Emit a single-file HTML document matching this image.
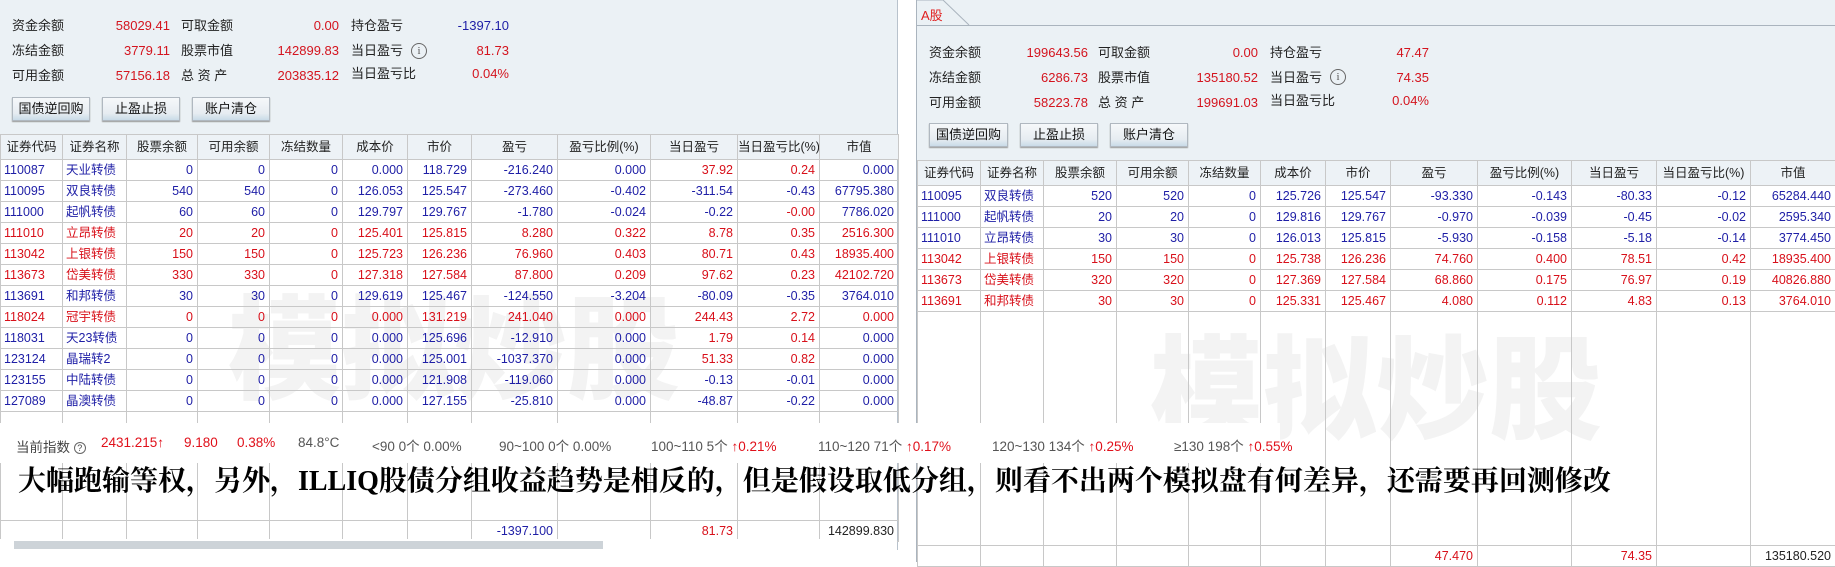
<!DOCTYPE html>
<html><head><meta charset="utf-8"><style>
*{margin:0;padding:0;box-sizing:border-box}
body{width:1835px;height:562px;position:relative;overflow:hidden;background:#fff;font-family:"Liberation Sans","Noto Sans CJK SC",sans-serif;font-size:12px;color:#222}
.abs{position:absolute}
.info{background:#ebf1f5}
.lbl{position:absolute;font-size:13px;color:#222;white-space:nowrap;line-height:16px}
.val{position:absolute;font-size:13px;color:#d4141e;text-align:right;white-space:nowrap;line-height:16px}
.btn{position:absolute;height:24px;border:1px solid #b0b8c0;background:linear-gradient(#f6f8fa,#e6ecf1 70%,#c9dbe8);font-size:13px;text-align:center;line-height:22px;color:#111;box-shadow:0 1px 1px #999}
.ic{position:absolute;width:16px;height:16px;border:1.3px solid #666;border-radius:50%;font-size:11px;line-height:14px;text-align:center;color:#555;font-family:"Liberation Serif",serif}
table{border-collapse:collapse;table-layout:fixed;position:absolute}
td{border:1px solid #c8c8c8;height:21px;padding:0 4px;text-align:right;white-space:nowrap;overflow:hidden;font-size:12.5px;line-height:14px}
th{border:1px solid #c8c8c8;height:25px;font-weight:normal;background:#edf2f6;font-size:12.5px;white-space:nowrap;overflow:hidden;color:#222;line-height:14px}
td.l{text-align:left;padding-left:3px}
tr.b td{color:#1e1ea6}
tr.r td{color:#d8101a}
td.R{color:#d8101a!important}
td.B{color:#1e1ea6!important}
.wm{position:absolute;font-family:"Noto Sans CJK SC",sans-serif;font-weight:900;font-size:113px;color:#f3f3f3;white-space:nowrap;line-height:1}
</style></head><body>

<!-- watermarks (behind) -->
<div class="wm" style="left:228px;top:285px">模拟炒股</div>
<div class="wm" style="left:1150px;top:325px">模拟炒股</div>

<!-- LEFT PANEL -->
<div class="abs info" style="left:0;top:0;width:898px;height:134px"></div>
<div class="abs" style="left:897px;top:0;width:1px;height:550px;background:#b8c2cc"></div>
<div class="lbl" style="left:12px;top:18px">资金余额</div><div class="val" style="left:100px;width:70px;top:18px">58029.41</div>
<div class="lbl" style="left:181px;top:18px">可取金额</div><div class="val" style="left:260px;width:79px;top:18px">0.00</div>
<div class="lbl" style="left:351px;top:18px">持仓盈亏</div><div class="val" style="left:430px;width:79px;top:18px;color:#1e1ea6">-1397.10</div>
<div class="lbl" style="left:12px;top:43px">冻结金额</div><div class="val" style="left:100px;width:70px;top:43px">3779.11</div>
<div class="lbl" style="left:181px;top:43px">股票市值</div><div class="val" style="left:260px;width:79px;top:43px">142899.83</div>
<div class="lbl" style="left:351px;top:43px">当日盈亏</div><div class="ic" style="left:411px;top:43px">i</div><div class="val" style="left:430px;width:79px;top:43px">81.73</div>
<div class="lbl" style="left:12px;top:68px">可用金额</div><div class="val" style="left:100px;width:70px;top:68px">57156.18</div>
<div class="lbl" style="left:181px;top:68px">总 资 产</div><div class="val" style="left:260px;width:79px;top:68px">203835.12</div>
<div class="lbl" style="left:351px;top:66px">当日盈亏比</div><div class="val" style="left:430px;width:79px;top:66px">0.04%</div>
<div class="btn" style="left:12px;top:97px;width:78px">国债逆回购</div>
<div class="btn" style="left:102px;top:97px;width:78px">止盈止损</div>
<div class="btn" style="left:192px;top:97px;width:78px">账户清仓</div>

<table style="left:0;top:134px;width:898px">
<colgroup><col style="width:62px"><col style="width:64px"><col style="width:71px"><col style="width:72px"><col style="width:73px"><col style="width:65px"><col style="width:64px"><col style="width:86px"><col style="width:93px"><col style="width:87px"><col style="width:82px"><col style="width:79px"></colgroup>
<tr><th>证券代码</th><th>证券名称</th><th>股票余额</th><th>可用余额</th><th>冻结数量</th><th>成本价</th><th>市价</th><th>盈亏</th><th>盈亏比例(%)</th><th>当日盈亏</th><th>当日盈亏比(%)</th><th>市值</th></tr>
<tr class="b"><td class="l">110087</td><td class="l">天业转债</td><td>0</td><td>0</td><td>0</td><td>0.000</td><td>118.729</td><td>-216.240</td><td>0.000</td><td class="R">37.92</td><td class="R">0.24</td><td>0.000</td></tr>
<tr class="b"><td class="l">110095</td><td class="l">双良转债</td><td>540</td><td>540</td><td>0</td><td>126.053</td><td>125.547</td><td>-273.460</td><td>-0.402</td><td>-311.54</td><td>-0.43</td><td>67795.380</td></tr>
<tr class="b"><td class="l">111000</td><td class="l">起帆转债</td><td>60</td><td>60</td><td>0</td><td>129.797</td><td>129.767</td><td>-1.780</td><td>-0.024</td><td>-0.22</td><td class="R">-0.00</td><td>7786.020</td></tr>
<tr class="r"><td class="l">111010</td><td class="l">立昂转债</td><td>20</td><td>20</td><td>0</td><td>125.401</td><td>125.815</td><td>8.280</td><td>0.322</td><td>8.78</td><td>0.35</td><td>2516.300</td></tr>
<tr class="r"><td class="l">113042</td><td class="l">上银转债</td><td>150</td><td>150</td><td>0</td><td>125.723</td><td>126.236</td><td>76.960</td><td>0.403</td><td>80.71</td><td>0.43</td><td>18935.400</td></tr>
<tr class="r"><td class="l">113673</td><td class="l">岱美转债</td><td>330</td><td>330</td><td>0</td><td>127.318</td><td>127.584</td><td>87.800</td><td>0.209</td><td>97.62</td><td>0.23</td><td>42102.720</td></tr>
<tr class="b"><td class="l">113691</td><td class="l">和邦转债</td><td>30</td><td>30</td><td>0</td><td>129.619</td><td>125.467</td><td>-124.550</td><td>-3.204</td><td>-80.09</td><td>-0.35</td><td>3764.010</td></tr>
<tr class="r"><td class="l">118024</td><td class="l">冠宇转债</td><td>0</td><td>0</td><td>0</td><td>0.000</td><td>131.219</td><td>241.040</td><td>0.000</td><td>244.43</td><td>2.72</td><td>0.000</td></tr>
<tr class="b"><td class="l">118031</td><td class="l">天23转债</td><td>0</td><td>0</td><td>0</td><td>0.000</td><td>125.696</td><td>-12.910</td><td>0.000</td><td class="R">1.79</td><td class="R">0.14</td><td>0.000</td></tr>
<tr class="b"><td class="l">123124</td><td class="l">晶瑞转2</td><td>0</td><td>0</td><td>0</td><td>0.000</td><td>125.001</td><td>-1037.370</td><td>0.000</td><td class="R">51.33</td><td class="R">0.82</td><td>0.000</td></tr>
<tr class="b"><td class="l">123155</td><td class="l">中陆转债</td><td>0</td><td>0</td><td>0</td><td>0.000</td><td>121.908</td><td>-119.060</td><td>0.000</td><td>-0.13</td><td>-0.01</td><td>0.000</td></tr>
<tr class="b"><td class="l">127089</td><td class="l">晶澳转债</td><td>0</td><td>0</td><td>0</td><td>0.000</td><td>127.155</td><td>-25.810</td><td>0.000</td><td>-48.87</td><td>-0.22</td><td>0.000</td></tr>
<tr><td></td><td></td><td></td><td></td><td></td><td></td><td></td><td></td><td></td><td></td><td></td><td></td></tr>
<tr><td style="height:88px"></td><td></td><td></td><td></td><td></td><td></td><td></td><td></td><td></td><td></td><td></td><td></td></tr>
<tr><td style="height:17px"></td><td></td><td></td><td></td><td></td><td></td><td></td><td class="B">-1397.100</td><td></td><td class="R">81.73</td><td></td><td>142899.830</td></tr>
</table>
<div class="abs" style="left:0;top:539px;width:897px;height:12px;background:#fff"></div>
<div class="abs" style="left:14px;top:541px;width:589px;height:8px;background:#cdd3d8"></div>

<!-- RIGHT PANEL -->
<div class="abs info" style="left:917px;top:0;width:918px;height:161px"></div>
<div class="abs" style="left:916px;top:0;width:1px;height:562px;background:#aab4be"></div>
<div class="abs" style="left:917px;top:25px;width:918px;height:1px;background:#aab4be"></div>
<svg class="abs" style="left:917px;top:0" width="60" height="26"><path d="M0 0H26L52 25" fill="none" stroke="#aab4be"/></svg>
<div class="abs" style="left:921px;top:5px;font-size:13px;color:#e02020">A股</div>
<div class="lbl" style="left:929px;top:45px">资金余额</div><div class="val" style="left:1008px;width:80px;top:45px">199643.56</div>
<div class="lbl" style="left:1098px;top:45px">可取金额</div><div class="val" style="left:1178px;width:80px;top:45px">0.00</div>
<div class="lbl" style="left:1270px;top:45px">持仓盈亏</div><div class="val" style="left:1349px;width:80px;top:45px">47.47</div>
<div class="lbl" style="left:929px;top:70px">冻结金额</div><div class="val" style="left:1008px;width:80px;top:70px">6286.73</div>
<div class="lbl" style="left:1098px;top:70px">股票市值</div><div class="val" style="left:1178px;width:80px;top:70px">135180.52</div>
<div class="lbl" style="left:1270px;top:70px">当日盈亏</div><div class="ic" style="left:1330px;top:69px">i</div><div class="val" style="left:1349px;width:80px;top:70px">74.35</div>
<div class="lbl" style="left:929px;top:95px">可用金额</div><div class="val" style="left:1008px;width:80px;top:95px">58223.78</div>
<div class="lbl" style="left:1098px;top:95px">总 资 产</div><div class="val" style="left:1178px;width:80px;top:95px">199691.03</div>
<div class="lbl" style="left:1270px;top:93px">当日盈亏比</div><div class="val" style="left:1349px;width:80px;top:93px">0.04%</div>
<div class="btn" style="left:929px;top:123px;width:79px">国债逆回购</div>
<div class="btn" style="left:1020px;top:123px;width:78px">止盈止损</div>
<div class="btn" style="left:1110px;top:123px;width:78px">账户清仓</div>

<table style="left:917px;top:160px;width:918px">
<colgroup><col style="width:63px"><col style="width:63px"><col style="width:73px"><col style="width:72px"><col style="width:72px"><col style="width:65px"><col style="width:65px"><col style="width:87px"><col style="width:94px"><col style="width:85px"><col style="width:94px"><col style="width:85px"></colgroup>
<tr><th>证券代码</th><th>证券名称</th><th>股票余额</th><th>可用余额</th><th>冻结数量</th><th>成本价</th><th>市价</th><th>盈亏</th><th>盈亏比例(%)</th><th>当日盈亏</th><th>当日盈亏比(%)</th><th>市值</th></tr>
<tr class="b"><td class="l">110095</td><td class="l">双良转债</td><td>520</td><td>520</td><td>0</td><td>125.726</td><td>125.547</td><td>-93.330</td><td>-0.143</td><td>-80.33</td><td>-0.12</td><td>65284.440</td></tr>
<tr class="b"><td class="l">111000</td><td class="l">起帆转债</td><td>20</td><td>20</td><td>0</td><td>129.816</td><td>129.767</td><td>-0.970</td><td>-0.039</td><td>-0.45</td><td>-0.02</td><td>2595.340</td></tr>
<tr class="b"><td class="l">111010</td><td class="l">立昂转债</td><td>30</td><td>30</td><td>0</td><td>126.013</td><td>125.815</td><td>-5.930</td><td>-0.158</td><td>-5.18</td><td>-0.14</td><td>3774.450</td></tr>
<tr class="r"><td class="l">113042</td><td class="l">上银转债</td><td>150</td><td>150</td><td>0</td><td>125.738</td><td>126.236</td><td>74.760</td><td>0.400</td><td>78.51</td><td>0.42</td><td>18935.400</td></tr>
<tr class="r"><td class="l">113673</td><td class="l">岱美转债</td><td>320</td><td>320</td><td>0</td><td>127.369</td><td>127.584</td><td>68.860</td><td>0.175</td><td>76.97</td><td>0.19</td><td>40826.880</td></tr>
<tr class="r"><td class="l">113691</td><td class="l">和邦转债</td><td>30</td><td>30</td><td>0</td><td>125.331</td><td>125.467</td><td>4.080</td><td>0.112</td><td>4.83</td><td>0.13</td><td>3764.010</td></tr>
<tr><td style="height:234px"></td><td></td><td></td><td></td><td></td><td></td><td></td><td></td><td></td><td></td><td></td><td></td></tr>
<tr><td style="height:20px"></td><td></td><td></td><td></td><td></td><td></td><td></td><td class="R">47.470</td><td></td><td class="R">74.35</td><td></td><td>135180.520</td></tr>
</table>

<!-- index band -->
<div class="abs" style="left:0;top:423px;width:1280px;height:40px;background:#fff;font-size:13.5px;white-space:nowrap">
<span class="abs" style="left:16px;top:13px;color:#444">当前指数 <span style="display:inline-block;width:12px;height:12px;border:1px solid #666;border-radius:50%;font-size:9px;line-height:10px;text-align:center;vertical-align:1px">?</span></span>
<span class="abs" style="left:101px;top:12px;color:#e0101a">2431.215↑</span>
<span class="abs" style="left:184px;top:12px;color:#e0101a">9.180</span>
<span class="abs" style="left:237px;top:12px;color:#e0101a">0.38%</span>
<span class="abs" style="left:298px;top:12px;color:#555">84.8°C</span>
<span class="abs" style="left:372px;top:12px;color:#555">&lt;90 0个 0.00%</span>
<span class="abs" style="left:499px;top:12px;color:#555">90~100 0个 0.00%</span>
<span class="abs" style="left:651px;top:12px;color:#555">100~110 5个 <span style="color:#e0101a">↑0.21%</span></span>
<span class="abs" style="left:818px;top:12px;color:#555">110~120 71个 <span style="color:#e0101a">↑0.17%</span></span>
<span class="abs" style="left:992px;top:12px;color:#555">120~130 134个 <span style="color:#e0101a">↑0.25%</span></span>
<span class="abs" style="left:1174px;top:12px;color:#555">≥130 198个 <span style="color:#e0101a">↑0.55%</span></span>
</div>

<div class="abs" style="left:18px;top:465px;font-family:'Liberation Serif','Noto Serif CJK SC',serif;font-size:28px;font-weight:bold;color:#000;white-space:nowrap;line-height:34px">大幅跑输等权，另外，ILLIQ股债分组收益趋势是相反的，但是假设取低分组，则看不出两个模拟盘有何差异，还需要再回测修改</div>
</body></html>
